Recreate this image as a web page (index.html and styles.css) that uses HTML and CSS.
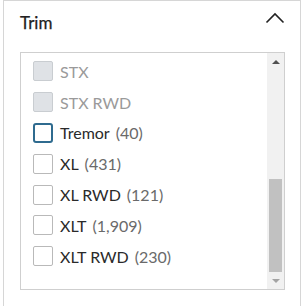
FILE: index.html
```html
<!DOCTYPE html>
<html lang="en">
  <head>
    <meta charset="UTF-8" />
    <meta name="viewport" content="width=device-width, initial-scale=1.0" />
    <title>Trim Filter</title>
    <link rel="stylesheet" href="styles.css">
  </head>
  <body>
    <div class="filter-card">
      <header class="filter-header">
        <h2>Trim</h2>
        <svg class="chevron" width="20" height="12" viewBox="0 0 20 12">
          <path d="M1.5 10.5 L10 2 L18.5 10.5" fill="none" stroke="#222" stroke-width="1.6" />
        </svg>
      </header>

      <div class="list-box">
        <ul class="option-list">
          <li class="option disabled"><span class="box"></span><span class="name">STX</span></li>
          <li class="option disabled"><span class="box"></span><span class="name">STX RWD</span></li>
          <li class="option"><span class="box focused"></span><span class="name">Tremor</span><span class="count">(40)</span></li>
          <li class="option"><span class="box"></span><span class="name">XL</span><span class="count">(431)</span></li>
          <li class="option"><span class="box"></span><span class="name">XL RWD</span><span class="count">(121)</span></li>
          <li class="option"><span class="box"></span><span class="name">XLT</span><span class="count">(1,909)</span></li>
          <li class="option"><span class="box"></span><span class="name">XLT RWD</span><span class="count">(230)</span></li>
        </ul>
        <div class="scrollbar">
          <div class="arrow up"></div>
          <div class="track"><div class="thumb"></div></div>
          <div class="arrow down"></div>
        </div>
      </div>
    </div>
  </body>
</html>
```

FILE: styles.css
```css
* {
  margin: 0;
  padding: 0;
  box-sizing: border-box;
  font-family: "Lato", "Liberation Sans", sans-serif;
}

body {
  background: #fff;
  color: #222;
  padding: 0 5px 0 3px;
}

.filter-card {
  border: 1px solid #d6d6d6;
  border-bottom: none;
  height: 306px;
  padding: 0 15px 0 16px;
}

.filter-header {
  display: flex;
  justify-content: space-between;
  align-items: center;
  height: 48px;
  padding-bottom: 6px;
}

.filter-header h2 {
  font-size: 17px;
  font-weight: 400;
  color: #222;
  -webkit-text-stroke: 0.25px #222;
}

.chevron {
  margin-top: -9px;
}

.list-box {
  display: flex;
  height: 238px;
  border: 1px solid #cfcfcf;
  margin-top: 3px;
}

.option-list {
  flex: 1;
  list-style: none;
  padding: 3px 0 0 12px;
  overflow: hidden;
}

.option {
  display: flex;
  align-items: center;
  height: 30.8px;
  font-size: 16px;
}

.box {
  width: 20px;
  height: 20px;
  border: 1px solid #b9b9b9;
  border-radius: 2px;
  background: #fff;
  margin-right: 7px;
  flex-shrink: 0;
}

.box.focused {
  border: 2px solid #2f6b8f;
  border-radius: 3px;
}

.name {
  color: #2a2a2a;
}

.count {
  color: #6a6a6a;
  margin-left: 6px;
}

.disabled .box {
  background: #dfe2e6;
  border-color: #c9cdd1;
}

.disabled .name {
  color: #9a9a9a;
}

.scrollbar {
  width: 17px;
  background: #f1f1f1;
  display: flex;
  flex-direction: column;
}

.arrow {
  height: 17px;
  display: flex;
  align-items: center;
  justify-content: center;
}

.arrow::before {
  content: "";
  border-left: 4px solid transparent;
  border-right: 4px solid transparent;
}

.arrow.up::before {
  border-bottom: 4px solid #505050;
}

.arrow.down::before {
  border-top: 4px solid #a3a3a3;
}

.track {
  flex: 1;
  display: flex;
  flex-direction: column;
  justify-content: flex-end;
  padding: 0 2px;
}

.thumb {
  height: 93px;
  background: #c1c1c1;
}
```
